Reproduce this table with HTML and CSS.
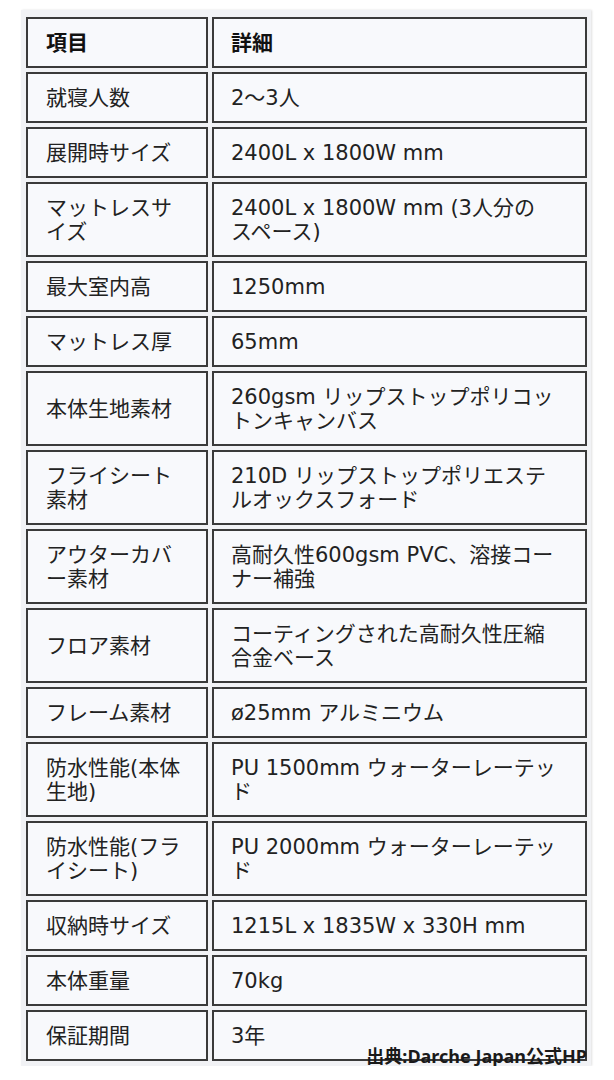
FILE: index.html
```html
<!DOCTYPE html>
<html lang="ja">
<head>
<meta charset="utf-8">
<title>仕様</title>
<link rel="stylesheet" href="styles.css">
</head>
<body>
<div class="panel">
  <table class="spec">
    <colgroup><col class="c1"><col class="c2"></colgroup>
    <thead>
      <tr><th>項目</th><th>詳細</th></tr>
    </thead>
    <tbody>
      <tr><td>就寝人数</td><td>2〜3人</td></tr>
      <tr><td>展開時サイズ</td><td>2400L x 1800W mm</td></tr>
      <tr><td>マットレスサ<br>イズ</td><td>2400L x 1800W mm (3人分の<br>スペース)</td></tr>
      <tr><td>最大室内高</td><td>1250mm</td></tr>
      <tr><td>マットレス厚</td><td>65mm</td></tr>
      <tr><td>本体生地素材</td><td>260gsm リップストップポリコッ<br>トンキャンバス</td></tr>
      <tr><td>フライシート<br>素材</td><td>210D リップストップポリエステ<br>ルオックスフォード</td></tr>
      <tr><td>アウターカバ<br>ー素材</td><td>高耐久性600gsm PVC、溶接コー<br>ナー補強</td></tr>
      <tr><td>フロア素材</td><td>コーティングされた高耐久性圧縮<br>合金ベース</td></tr>
      <tr><td>フレーム素材</td><td>ø25mm アルミニウム</td></tr>
      <tr><td>防水性能(本体<br>生地)</td><td>PU 1500mm ウォーターレーテッ<br>ド</td></tr>
      <tr><td>防水性能(フラ<br>イシート)</td><td>PU 2000mm ウォーターレーテッ<br>ド</td></tr>
      <tr><td>収納時サイズ</td><td>1215L x 1835W x 330H mm</td></tr>
      <tr><td>本体重量</td><td>70kg</td></tr>
      <tr><td>保証期間</td><td>3年</td></tr>
    </tbody>
  </table>
  <p class="credit">出典:Darche Japan公式HP</p>
</div>
</body>
</html>
```

FILE: styles.css
```css
body {
  margin: 0;
  background: #ffffff;
  font-family: "DejaVu Sans", "Noto Sans CJK JP", sans-serif;
  color: #222222;
}

.panel {
  position: relative;
  box-sizing: border-box;
  width: 570px;
  margin: 10px 0 0 21px;
  padding: 3px 0 1px 1px;
  background: #f1f2f5;
  box-shadow: 1px 0 2px rgba(0, 0, 0, 0.12);
}

.spec {
  border-collapse: separate;
  border-spacing: 4px;
  table-layout: fixed;
  width: 569px;
}

.c1 { width: 182px; }
.c2 { width: 375px; }

.spec th,
.spec td {
  border: 2px solid #3a3a3a;
  background: #f8f9fc;
  padding: 11.5px 18px;
  font-size: 21px;
  line-height: 24px;
  text-align: left;
  vertical-align: middle;
  font-weight: normal;
}

.spec th:nth-child(2),
.spec td:nth-child(2) {
  padding-left: 17px;
}

.spec th {
  font-weight: bold;
  color: #111111;
}

.credit {
  position: absolute;
  right: 4px;
  bottom: 1px;
  margin: 0;
  font-family: "Noto Sans", "Noto Sans CJK JP", sans-serif;
  font-weight: bold;
  font-size: 18px;
  line-height: 18px;
  color: #1a1a1a;
}
```
